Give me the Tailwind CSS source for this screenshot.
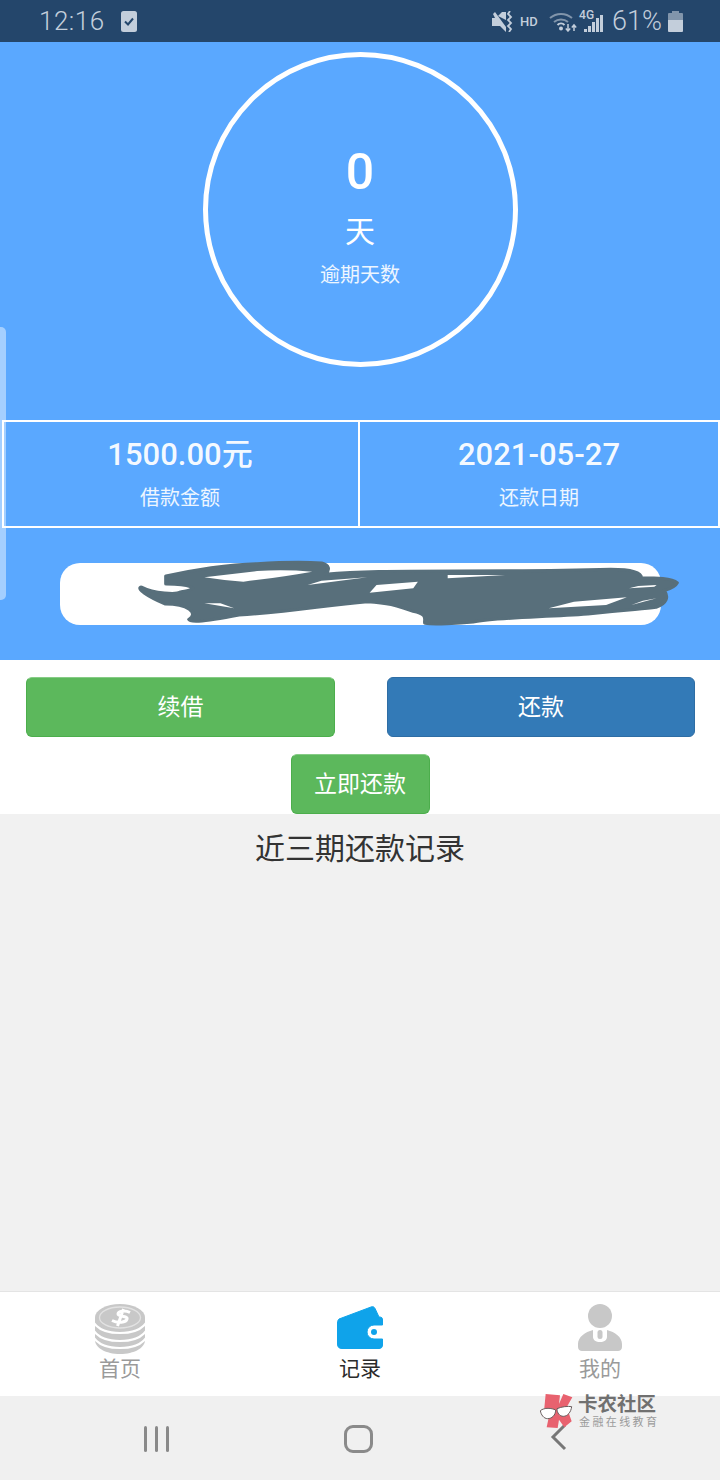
<!DOCTYPE html>
<html lang="zh">
<head>
  <meta charset="UTF-8" />
  <meta name="viewport" content="width=device-width, initial-scale=1.0" />
  <title>还款记录</title>
  <script src="https://cdn.jsdelivr.net/npm/@tailwindcss/browser@4"></script>
</head>
<body class="bg-[#f1f1f1] font-['Roboto','Noto_Sans_CJK_SC',sans-serif]">
  <div class="relative w-[720px] h-[1480px] overflow-hidden flex flex-col">

    <!-- status bar -->
    <div class="h-[42px] shrink-0 bg-[#24466b] flex items-center justify-between pl-[39px] pr-[37px] text-[#c3cedb]">
      <div class="flex items-center gap-[16px]">
        <span class="text-[26px] font-light leading-none tracking-[0.5px]">12:16</span>
        <svg width="16" height="21" viewBox="0 0 16 21"><rect width="16" height="21" rx="2.500" fill="#c3cedb"/><path d="M4 10.500l3 3 5-6" fill="none" stroke="#24466b" stroke-width="2"/></svg>
      </div>
      <div class="flex items-center">
        <svg width="21" height="21" viewBox="0 0 21 21" class="mr-[7px]"><path fill="#c3cedb" d="M0 7h3L1 3l2-2 11 15v5L8 15H0z"/><path fill="#c3cedb" d="M6 5l4-4h4v8z"/><path d="M18 0l-2 3 3 3-3 3 3 3-3 3 3 3-2 3" fill="none" stroke="#c3cedb" stroke-width="1.800"/></svg>
        <span class="text-[13px] font-medium leading-none w-[16px] mr-[13px]">HD</span>
        <svg width="28" height="22" viewBox="0 0 28 22" class="mr-[2px]"><path d="M1 8a17 17 0 0 1 22 0M5 12a11 11 0 0 1 14 0" fill="none" stroke="#8195ab" stroke-width="2"/><path d="M8.500 15a5 5 0 0 1 7 0" fill="none" stroke="#c3cedb" stroke-width="2"/><circle cx="12" cy="18.500" r="2" fill="#c3cedb"/><path d="M19 14v7M16.800 18.500l2.200 2.500 2.200-2.500M25 21v-6M22.800 17.500l2.200-2.500 2.200 2.500" fill="none" stroke="#c3cedb" stroke-width="1.500"/></svg>
        <div class="relative w-[24px] h-[22px] mr-[9px]">
          <span class="absolute -top-[1px] left-0 text-[12px] font-medium leading-none">4G</span>
          <div class="absolute bottom-0 left-[5px] flex items-end gap-[1.500px]">
            <span class="w-[2.500px] h-[3px] bg-[#c3cedb]"></span>
            <span class="w-[2.500px] h-[6px] bg-[#c3cedb]"></span>
            <span class="w-[2.500px] h-[10px] bg-[#c3cedb]"></span>
            <span class="w-[2.500px] h-[14px] bg-[#c3cedb]"></span>
            <span class="w-[2.500px] h-[17px] bg-[#c3cedb]"></span>
          </div>
        </div>
        <span class="text-[27px] font-light leading-none mr-[6px]">61%</span>
        <div class="flex flex-col items-center w-[15px]">
          <span class="w-[7px] h-[2px] bg-[#8195ab]"></span>
          <span class="w-[15px] h-[7px] bg-[#8195ab] rounded-t-[1px]"></span>
          <span class="w-[15px] h-[12px] bg-[#c3cedb] rounded-b-[1px]"></span>
        </div>
      </div>
    </div>

    <!-- summary -->
    <div class="h-[618px] shrink-0 bg-[#5aa8ff] text-white flex flex-col items-center">
      <div class="mt-[10px] w-[315px] h-[315px] rounded-full border-[5px] border-white flex flex-col items-center">
        <span class="mt-[90px] text-[50px] font-medium leading-none">0</span>
        <span class="mt-[20px] text-[30px] leading-none">天</span>
        <span class="mt-[18px] text-[20px] leading-none text-white/90">逾期天数</span>
      </div>
      <div class="mt-[53px] w-full h-[108px] pl-[2px] flex">
        <div class="w-[358px] border-2 border-white pr-[2px] flex flex-col items-center">
          <span class="mt-[17px] text-[31px] font-medium leading-none text-white/95">1500.00元</span>
          <span class="mt-[18px] text-[20px] leading-none text-white/90">借款金额</span>
        </div>
        <div class="flex-1 -ml-[2px] border-2 border-white flex flex-col items-center">
          <span class="mt-[17px] text-[31px] font-medium leading-none text-white/95">2021-05-27</span>
          <span class="mt-[18px] text-[20px] leading-none text-white/90">还款日期</span>
        </div>
      </div>
      <div class="mt-[35px] ml-[1px] w-[601px] h-[62px] rounded-[20px] bg-white"></div>
    </div>

    <!-- actions -->
    <div class="h-[154px] shrink-0 bg-white flex flex-col">
      <div class="pt-[17px] pl-[26px] pr-[25px] flex justify-between">
        <button class="w-[309px] h-[60px] pt-[2px] rounded-[6px] bg-[#5cb85c] border border-[#4cae4c] border-t-[#86cc86] text-white text-[23px]">续借</button>
        <button class="w-[308px] h-[60px] pt-[2px] rounded-[6px] bg-[#337ab7] border border-[#2e6da4] text-white text-[23px]">还款</button>
      </div>
      <div class="pt-[17px] flex justify-center">
        <button class="w-[139px] h-[60px] pt-[2px] rounded-[6px] bg-[#5cb85c] border border-[#4cae4c] border-t-[#86cc86] text-white text-[23px]">立即还款</button>
      </div>
    </div>

    <!-- records -->
    <div class="flex-1 bg-[#f1f1f1] text-center">
      <h2 class="mt-[15px] text-[30px] leading-[40px] text-[#333]">近三期还款记录</h2>
    </div>

    <!-- tab bar -->
    <div class="h-[105px] shrink-0 bg-white border-t border-[#e4e4e4] grid grid-cols-3">
      <div class="flex flex-col items-center pt-[12px]">
        <svg width="50" height="50" viewBox="0 0 50 50">
          <path fill="#c8c8c8" d="M0 14v22c0 8 11 14 25 14s25-6 25-14V14z"/>
          <g fill="none" stroke="#fff" stroke-width="2.200">
            <path d="M-1 19c5 7 15 10 26 10s21-3 26-10"/>
            <path d="M-1 27c5 7 15 10 26 10s21-3 26-10"/>
            <path d="M-1 34c5 7 15 10 26 10s21-3 26-10"/>
          </g>
          <ellipse cx="25" cy="13.500" rx="25" ry="13.500" fill="#c8c8c8"/>
          <ellipse cx="25" cy="13.500" rx="20.500" ry="10.500" fill="none" stroke="#e2e2e2" stroke-width="1.300"/>
          <path d="M35 8.500c-5-2.500-12-1.500-12 1.500s10 1.500 9 5-9 4.500-15 1.500M28.500 5l-6 17" fill="none" stroke="#fff" stroke-width="3"/>
        </svg>
        <span class="mt-[2px] text-[21px] leading-[26px] text-[#9a9a9a]">首页</span>
      </div>
      <div class="flex flex-col items-center pt-[12px]">
        <svg width="50" height="50" viewBox="0 0 50 50">
          <g transform="translate(2 2)">
            <path fill="#0fa3ea" stroke="#0fa3ea" stroke-width="1" stroke-linejoin="round" d="M2 13L34 1c2-.8 3-.2 4 1.400L42 11c3 0 3.500 1 3.500 3v5H37a7 7 0 0 0 0 14h8.500v6c0 2.500-1.500 3.500-3.500 3.500H5c-3 0-4.500-1.500-4.500-4.500V17c0-2 .5-3 1.500-4z"/>
            <circle cx="37" cy="26" r="3" fill="#0fa3ea"/>
          </g>
        </svg>
        <span class="mt-[2px] text-[21px] leading-[26px] text-[#2b2b2b]">记录</span>
      </div>
      <div class="flex flex-col items-center pt-[12px]">
        <svg width="50" height="50" viewBox="0 0 50 50">
          <g transform="translate(3 0)">
            <circle cx="22" cy="12" r="12" fill="#c8c8c8"/>
            <path fill="#c8c8c8" d="M0 43v-3c0-7 7-12 15-14v7c0 3 3 5 7 5s7-2 7-5v-7c8 2 15 7 15 14v3c0 2.500-2 4-4 4H4c-2 0-4-1.500-4-4z"/>
            <rect x="19.500" y="26" width="5" height="9" rx="2.500" fill="#c8c8c8"/>
          </g>
        </svg>
        <span class="mt-[2px] text-[21px] leading-[26px] text-[#9a9a9a]">我的</span>
      </div>
    </div>

    <!-- system nav -->
    <div class="h-[84px] shrink-0 bg-[#f0f0f0] grid grid-cols-3 items-center pt-[2px]">
      <div class="flex justify-center gap-[8px] pl-[72px]">
        <span class="w-[3px] h-[26px] rounded-full bg-[#8a8a8a]"></span>
        <span class="w-[3px] h-[26px] rounded-full bg-[#8a8a8a]"></span>
        <span class="w-[3px] h-[26px] rounded-full bg-[#8a8a8a]"></span>
      </div>
      <div class="flex justify-center pr-[4px]">
        <span class="w-[29px] h-[28px] rounded-[9px] border-[3px] border-[#8a8a8a] block"></span>
      </div>
      <div class="flex justify-center pr-[84px]">
        <svg width="17" height="28" viewBox="0 0 17 28" class="-mt-[4px]"><path d="M15 2L3 14l12 12" fill="none" stroke="#777" stroke-width="3"/></svg>
      </div>
    </div>

    <!-- side handle over the page -->
    <div class="absolute left-0 top-[327px] w-[6px] h-[273px] rounded-r-[5px] bg-white/45"></div>

    <!-- hand drawn redaction over the pill, traced from a stretched crop -->
    <svg class="absolute left-0 top-[540px]" width="720" height="110" viewBox="0 0 1568 330" preserveAspectRatio="none">
      <path fill="#586f7b" stroke="#586f7b" stroke-width="9" stroke-linejoin="round" d="M362 108C420 90 500 72 560 71 620 66 670 66 700 69 716 74 718 90 708 103 780 94 850 93 1000 93 1100 93 1200 93 1330 88 1370 88 1395 95 1396 113 1430 113 1462 114 1474 128 1470 140 1455 148 1446 152 1455 170 1452 190 1428 202 1400 208 1370 208 1280 222 1180 232 1080 232 1030 246 1000 250 945 254 926 250 924 238 935 224 900 214 870 203 868 191 800 185 700 197 640 215 520 225 430 249 414 246 412 238 435 220 410 192 360 192 320 168 300 148 307 141 335 161 385 165 395 155 440 147 415 132 362 132Z"/>
      <g fill="#fff">
        <path d="M445 112Q490 122 530 125 610 112 680 95 620 88 560 93Z"/>
        <path d="M670 135L800 112 700 122Z"/>
        <path d="M805 158L900 145 910 125 820 135Z"/>
        <path d="M975 105L1100 105 975 115Z"/>
        <path d="M1195 205L1320 195 1365 172 1250 185Z"/>
        <path d="M1375 195L1430 175 1400 182Z"/>
        <path d="M1370 145L1425 140 1430 135 1390 138Z"/>
        <path d="M445 190L510 205 480 190Z"/>
      </g>
    </svg>

    <!-- watermark -->
    <div class="absolute left-[540px] top-[1392px] flex items-start">
      <svg width="36" height="38" viewBox="15 12 108 114">
        <path fill="#e8626f" d="M32 18L75 22 72 48 85 18 112 28 95 58 110 100 88 118 72 95 68 120 35 118 42 85 28 60Z"/>
        <path d="M16 68C28 58 50 60 62 66 62 82 50 92 38 92 26 92 18 80 16 68ZM66 62C80 56 98 54 110 56 108 72 98 85 85 85 74 85 66 75 66 62Z" fill="#fff" stroke="#6a5d5d" stroke-width="3"/>
      </svg>
      <div class="ml-[2px] pt-[3px] flex flex-col items-start">
        <span class="text-[19.500px] font-bold leading-[20px] text-[#707070]">卡农社区</span>
        <span class="mt-[1px] ml-[1px] text-[11px] leading-[13px] tracking-[2.400px] text-[#9b9b9b]">金融在线教育</span>
      </div>
    </div>
  </div>
</body>
</html>
